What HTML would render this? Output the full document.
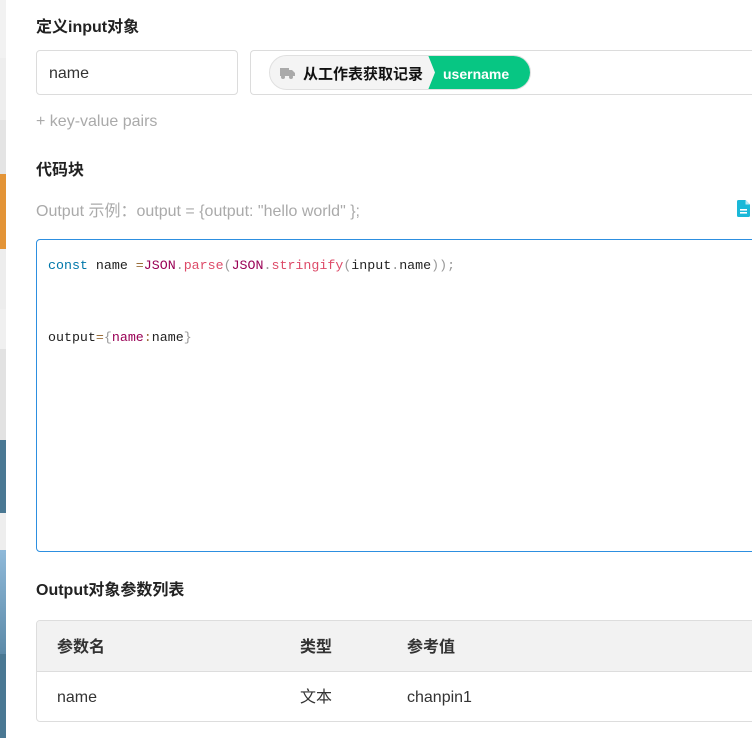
<!DOCTYPE html>
<html><head><meta charset="utf-8"><style>
*{margin:0;padding:0;box-sizing:border-box}
body{width:752px;height:738px;overflow:hidden;background:#fff;font-family:"Liberation Sans","Noto Sans CJK SC",sans-serif;position:relative;color:#333;line-height:24px}
.strip{position:absolute;left:0;top:0;width:6px;height:738px;background:linear-gradient(90deg,#e8e8e8,#cfcfcf)}
.strip div{position:absolute;left:0;width:6px}
.a{position:absolute;line-height:24px;white-space:nowrap}
h3{position:absolute;font-size:16px;font-weight:bold;color:#222;line-height:24px}
.box{position:absolute;border:1px solid #dcdcdc;border-radius:4px;background:#fff}
.code{font-family:"Liberation Mono","DejaVu Sans Mono",monospace;font-size:13.3px;position:absolute;left:48px;white-space:pre;line-height:20px}
</style></head><body>
<div class="strip">
<div style="top:0;height:58px;background:#f2f2f2"></div>
<div style="top:58px;height:62px;background:#eee"></div>
<div style="top:120px;height:54px;background:#e4e4e4"></div>
<div style="top:174px;height:75px;background:#e39437"></div>
<div style="top:249px;height:60px;background:#ededed"></div>
<div style="top:309px;height:40px;background:#f0f0f0"></div>
<div style="top:349px;height:91px;background:#e2e2e2"></div>
<div style="top:440px;height:73px;background:#4a7893"></div>
<div style="top:513px;height:37px;background:#eee"></div>
<div style="top:550px;height:104px;background:linear-gradient(#8fb9d9,#5c8aa8)"></div>
<div style="top:654px;height:84px;background:#4a7893"></div>
</div>
<h3 style="left:36px;top:16px">定义input对象</h3>
<div class="box" style="left:36px;top:50px;width:202px;height:45px"><span class="a" style="left:12px;top:11px;font-size:16px;color:#333">name</span></div>
<div class="box" style="left:250px;top:50px;width:520px;height:45px;border-right:none">
<div class="a" style="left:18px;top:4px;width:262px;height:35px;border-radius:18px;background:#f4f4f4;border:1px solid #e0e0e0;overflow:hidden">
<svg class="a" style="left:10px;top:12px" width="15" height="11" viewBox="0 0 15 11"><rect x="0" y="0" width="9" height="8" fill="#aaa"/><path d="M9 2h3l3 3v3H9z" fill="#aaa"/><circle cx="3" cy="9" r="2" fill="#aaa"/><circle cx="11" cy="9" r="2" fill="#aaa"/></svg>
<span class="a" style="left:33px;top:7px;font-size:15px;font-weight:bold;color:#111">从工作表获取记录</span>
<div class="a" style="left:158px;top:-1px;width:110px;height:35px;background:#07c683;clip-path:polygon(0 0,100% 0,100% 100%,0 100%,7px 50%)"></div>
<span class="a" style="left:173px;top:6px;font-size:14px;font-weight:bold;color:#fff">username</span>
</div></div>
<div class="a" style="left:36px;top:110px;font-size:16px;color:#aaa">+ key-value pairs</div>
<h3 style="left:36px;top:159px">代码块</h3>
<div class="a" style="left:36px;top:200px;font-size:16px;color:#aaa">Output 示例：output = {output: "hello world" };</div>
<svg class="a" style="left:737px;top:200px" width="13" height="17" viewBox="0 0 13 17"><path d="M1.5 0h7l4.5 4.5V15.5a1.5 1.5 0 0 1-1.5 1.5h-10A1.5 1.5 0 0 1 0 15.5V1.5A1.5 1.5 0 0 1 1.5 0z" fill="#1ab8d8"/><path d="M8.5 0v4.5H13" fill="#bdeaf5"/><rect x="3" y="9" width="7" height="1.6" fill="#fff"/><rect x="3" y="12" width="7" height="1.6" fill="#fff"/></svg>
<div class="a" style="left:36px;top:239px;width:730px;height:313px;border:1px solid #2d8fe0;border-radius:4px"></div>
<div class="code" style="top:256px"><span style="color:#0077aa">const</span> <span style="color:#222">name</span> <span style="color:#9a6e3a">=</span><span style="color:#990055">JSON</span><span style="color:#999">.</span><span style="color:#dd4a68">parse</span><span style="color:#999">(</span><span style="color:#990055">JSON</span><span style="color:#999">.</span><span style="color:#dd4a68">stringify</span><span style="color:#999">(</span><span style="color:#222">input</span><span style="color:#999">.</span><span style="color:#222">name</span><span style="color:#999">));</span></div>
<div class="code" style="top:328px"><span style="color:#222">output</span><span style="color:#9a6e3a">=</span><span style="color:#999">{</span><span style="color:#990055">name</span><span style="color:#9a6e3a">:</span><span style="color:#222">name</span><span style="color:#999">}</span></div>
<h3 style="left:36px;top:579px">Output对象参数列表</h3>
<div class="a" style="left:36px;top:620px;width:730px;height:102px;border:1px solid #ddd;border-radius:4px;overflow:hidden">
<div class="a" style="left:0;top:0;width:100%;height:51px;background:#f2f2f2;border-bottom:1px solid #ddd"></div>
<span class="a" style="left:20px;top:15px;font-size:16px;font-weight:bold;color:#333">参数名</span>
<span class="a" style="left:263px;top:15px;font-size:16px;font-weight:bold;color:#333">类型</span>
<span class="a" style="left:370px;top:15px;font-size:16px;font-weight:bold;color:#333">参考值</span>
<span class="a" style="left:20px;top:65px;font-size:16px;color:#333">name</span>
<span class="a" style="left:263px;top:65px;font-size:16px;color:#333">文本</span>
<span class="a" style="left:370px;top:65px;font-size:16px;color:#333">chanpin1</span>
</div>
</body></html>
